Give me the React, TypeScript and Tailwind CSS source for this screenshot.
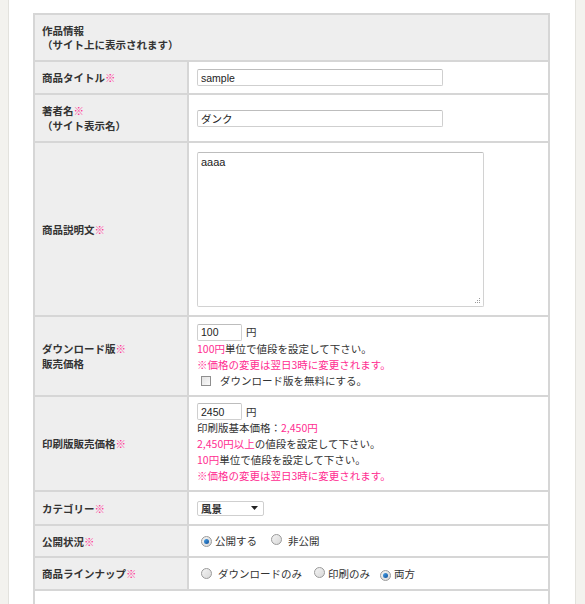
import React from 'react'

const FONT = { fontFamily: '"Noto Sans CJK JP", "Noto Sans", sans-serif' }
const INPUT_FONT = { fontFamily: '"Liberation Sans", "Noto Sans CJK JP", sans-serif' }

function Req() {
  return <span className="text-[#ff2d91]">※</span>
}

function Radio({ checked }: { checked?: boolean }) {
  return (
    <span className="inline-flex h-[11px] w-[11px] shrink-0 items-center justify-center rounded-full border border-[#9a9a9a] bg-gradient-to-br from-[#f4f4f4] to-[#d8d8d8]">
      {checked && <span className="h-[5px] w-[5px] rounded-full bg-gradient-to-br from-[#4aa3e8] to-[#0f4f9a]" />}
    </span>
  )
}

function Row({
  h,
  label,
  children,
  top,
}: {
  h: string
  label: React.ReactNode
  children: React.ReactNode
  top?: boolean
}) {
  return (
    <div className={`flex border-b-2 border-[#d6d6d6] ${h}`}>
      <div className="flex w-[154px] shrink-0 items-center border-r-2 border-[#d6d6d6] bg-[#eeeeee] px-[7px] text-[10.5px] font-bold leading-[15px] text-[#333]">
        <div>{label}</div>
      </div>
      <div className={`flex flex-1 pl-[8px] ${top ? 'items-start pt-[7px]' : 'items-center'}`}>
        {children}
      </div>
    </div>
  )
}

export default function App() {
  const input = 'h-[17px] rounded-[2px] border border-[#cfcfcf] border-t-[#bdbdbd] bg-white px-[3px] text-[10.5px] leading-[15px] text-[#222] outline-none'
  return (
    <div className="min-h-screen bg-[#f3f2ee]" style={FONT}>
      <div className="ml-[8px] min-h-screen w-[568px] border-x border-[#e3e2dd] bg-white pl-[24px] pt-[13px]">
        <div className="w-[517px] border-x-2 border-t-2 border-[#d6d6d6] text-[#333]">
          {/* header */}
          <div className="flex h-[47px] items-center border-b-2 border-[#d6d6d6] bg-[#eeeeee] px-[7px] text-[10.5px] font-bold leading-[14px]">
            <div>
              作品情報
              <br />
              （サイト上に表示されます）
            </div>
          </div>

          <Row h="h-[33px]" label={<>商品タイトル<Req /></>}>
            <input className={`${input} w-[246px]`} defaultValue="sample" style={INPUT_FONT} />
          </Row>

          <Row h="h-[48px]" label={<>著者名<Req /><br />（サイト表示名）</>}>
            <input className={`${input} w-[246px]`} defaultValue="ダンク" style={INPUT_FONT} />
          </Row>

          <Row h="h-[174px]" top label={<>商品説明文<Req /></>}>
            <div className="relative mt-[2px]">
              <textarea
                className="block h-[155px] w-[287px] resize-none rounded-[2px] border border-[#d2d2d2] border-t-[#bdbdbd] bg-white px-[3px] py-[2px] text-[11px] leading-[14px] text-[#222] outline-none"
                defaultValue="aaaa"
                style={INPUT_FONT}
              />
              {/* resize grip */}
              <svg className="absolute bottom-[3px] right-[3px]" width="6" height="6" viewBox="0 0 6 6">
                <rect x="4" y="0" width="1" height="1" fill="#9a9a9a" />
                <rect x="4" y="2" width="1" height="1" fill="#9a9a9a" />
                <rect x="2" y="2" width="1" height="1" fill="#9a9a9a" />
                <rect x="4" y="4" width="1" height="1" fill="#9a9a9a" />
                <rect x="2" y="4" width="1" height="1" fill="#9a9a9a" />
                <rect x="0" y="4" width="1" height="1" fill="#9a9a9a" />
              </svg>
            </div>
          </Row>

          <Row h="h-[80px]" label={<>ダウンロード版<Req /><br />販売価格</>}>
            <div className="text-[10.5px] leading-[16px] text-[#333]">
              <div className="flex items-center">
                <input className={`${input} w-[45px]`} defaultValue="100" style={INPUT_FONT} />
                <span className="ml-[4px]">円</span>
              </div>
              <div>
                <span className="text-[#ff2d91]">100円</span>単位で値段を設定して下さい。
              </div>
              <div className="text-[#ff2d91]">※価格の変更は翌日3時に変更されます。</div>
              <div className="flex items-center pl-[4px]">
                <span className="h-[10px] w-[10px] border border-[#8f8f8f] bg-gradient-to-br from-[#e2e2e2] to-[#fafafa]" />
                <span className="ml-[9px]">ダウンロード版を無料にする。</span>
              </div>
            </div>
          </Row>

          <Row h="h-[95px]" label={<>印刷版販売価格<Req /></>}>
            <div className="text-[10.5px] leading-[16px] text-[#333]">
              <div className="flex items-center">
                <input className={`${input} w-[45px]`} defaultValue="2450" style={INPUT_FONT} />
                <span className="ml-[4px]">円</span>
              </div>
              <div>
                印刷版基本価格：<span className="text-[#ff2d91]">2,450円</span>
              </div>
              <div>
                <span className="text-[#ff2d91]">2,450円以上</span>の値段を設定して下さい。
              </div>
              <div>
                <span className="text-[#ff2d91]">10円</span>単位で値段を設定して下さい。
              </div>
              <div className="text-[#ff2d91]">※価格の変更は翌日3時に変更されます。</div>
            </div>
          </Row>

          <Row h="h-[34px]" label={<>カテゴリー<Req /></>}>
            <div className="flex h-[15px] w-[67px] items-center justify-between rounded-[2px] border border-[#cfcfcf] bg-white pl-[3px] pr-[5px] text-[10.5px] font-bold text-[#333]">
              <span className="leading-[13px]">風景</span>
              <svg width="7" height="4" viewBox="0 0 7 4">
                <path d="M0 0h7L3.5 4z" fill="#222" />
              </svg>
            </div>
          </Row>

          <Row h="h-[32px]" label={<>公開状況<Req /></>}>
            <div className="flex items-center pl-[4px] text-[10.5px] text-[#333]">
              <Radio checked />
              <span className="ml-[3px]">公開する</span>
              <span className="ml-[14px]">
                <Radio />
              </span>
              <span className="ml-[6px]">非公開</span>
            </div>
          </Row>

          <Row h="h-[33px]" label={<>商品ラインナップ<Req /></>}>
            <div className="flex items-center pl-[4px] text-[10.5px] text-[#333]">
              <Radio />
              <span className="ml-[6px]">ダウンロードのみ</span>
              <span className="ml-[12px]">
                <Radio />
              </span>
              <span className="ml-[3px]">印刷のみ</span>
              <span className="ml-[10px]">
                <Radio checked />
              </span>
              <span className="ml-[3px]">両方</span>
            </div>
          </Row>

          <div className="h-[40px] bg-white" />
        </div>
      </div>
    </div>
  )
}
